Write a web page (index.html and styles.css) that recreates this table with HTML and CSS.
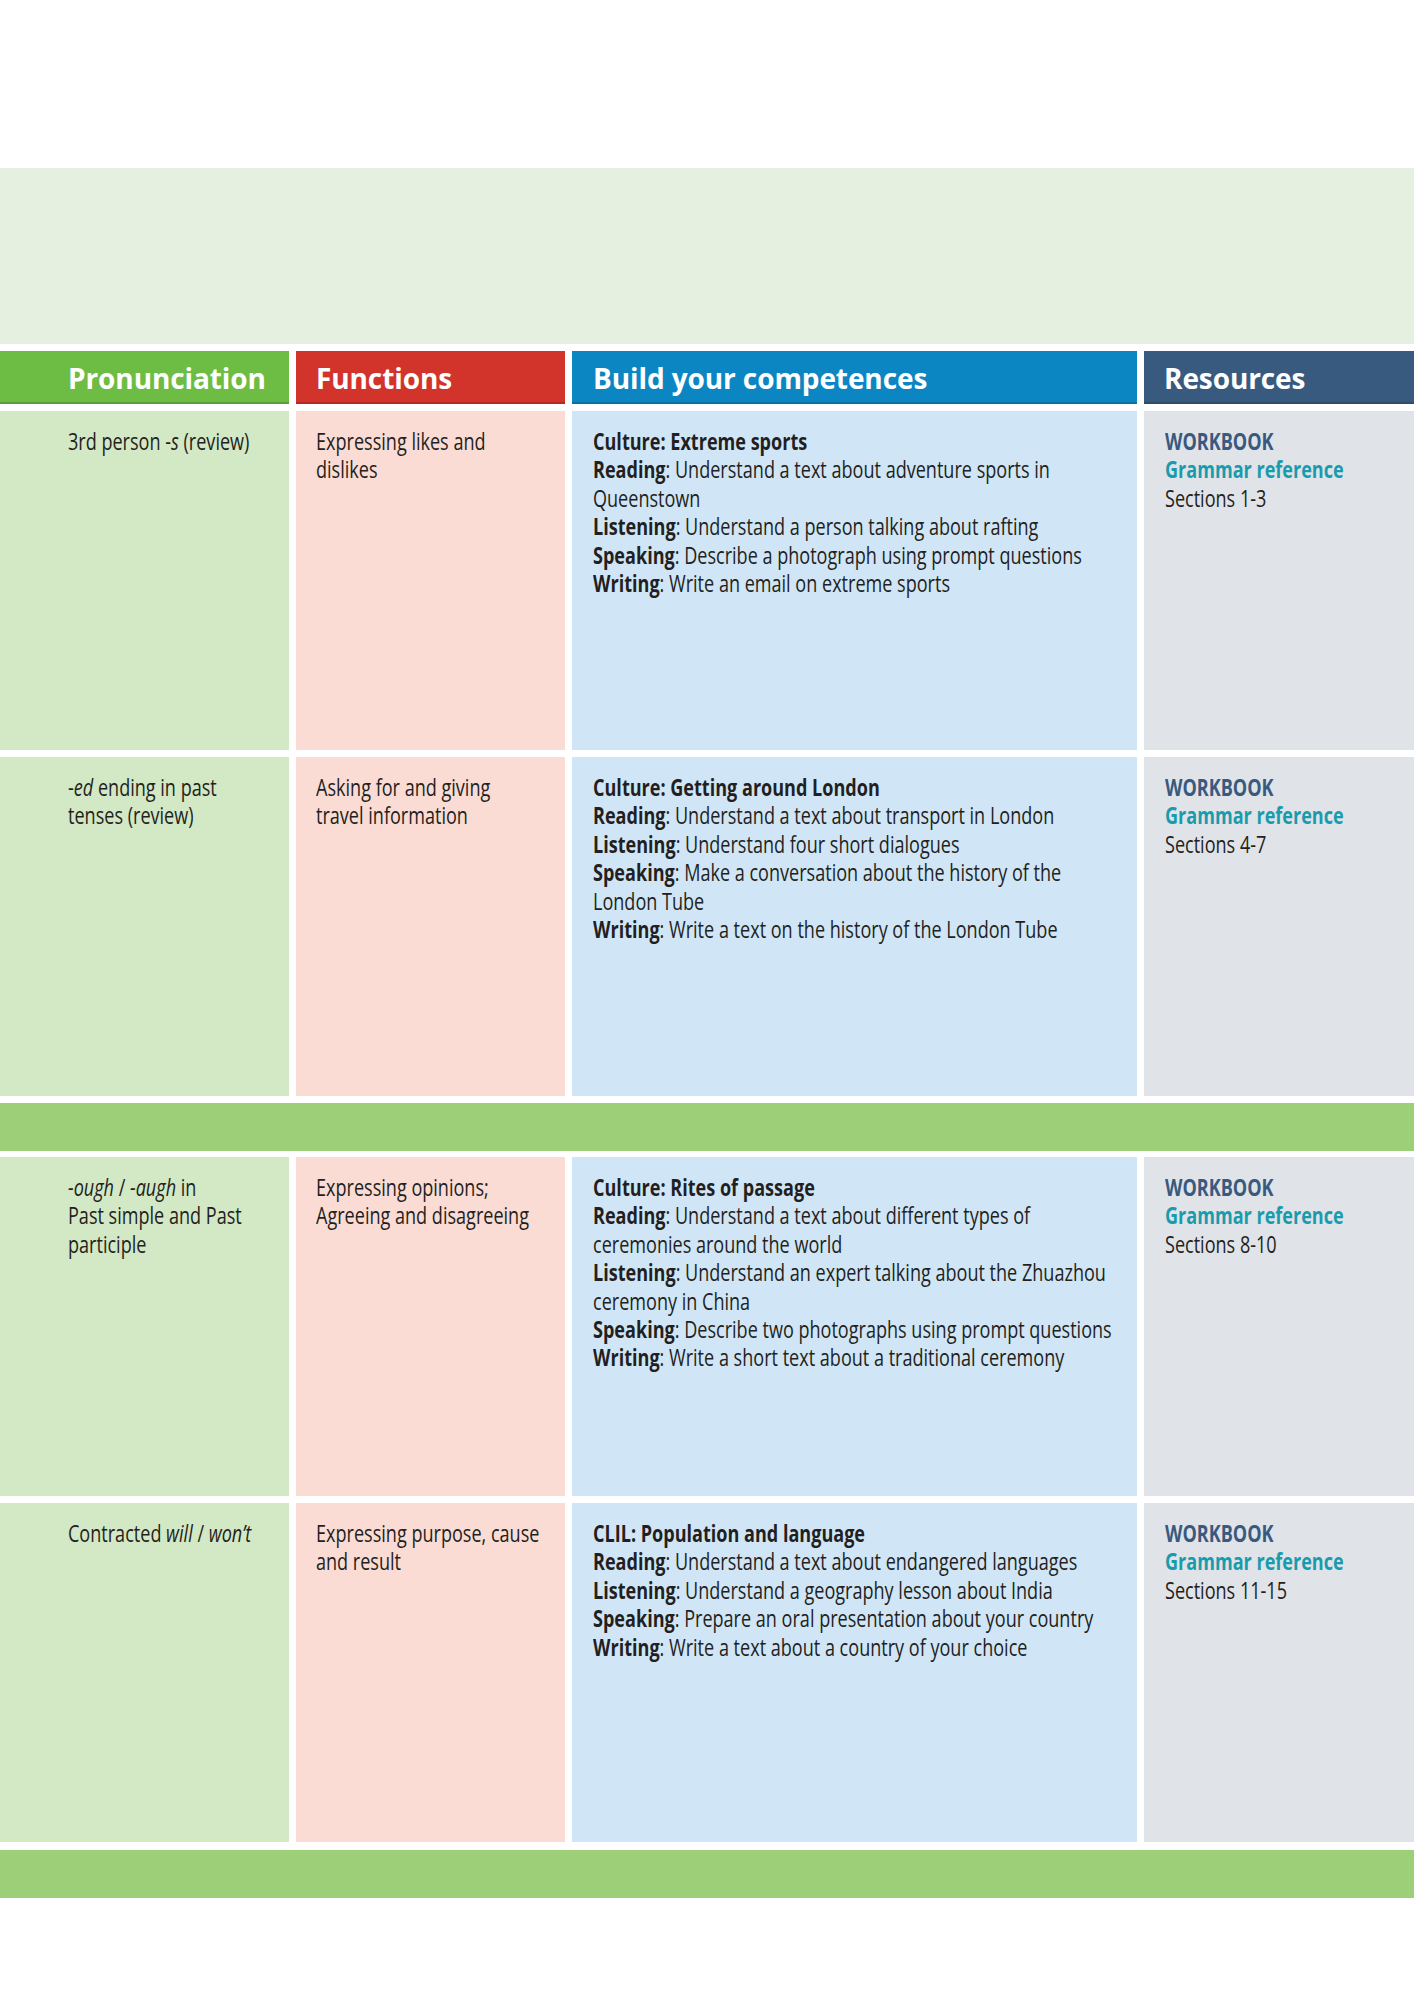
FILE: index.html
```html
<!DOCTYPE html>
<html lang="en">
<head>
<meta charset="utf-8">
<title>Syllabus</title>
<link rel="stylesheet" href="styles.css">
</head>
<body>
<div class="page">
  <div class="topband"></div>
  <div class="table">
    <div class="row head">
      <div class="hcell h-pron">Pronunciation</div>
      <div class="hcell h-func">Functions</div>
      <div class="hcell h-comp">Build your competences</div>
      <div class="hcell h-res">Resources</div>
    </div>

    <div class="row body">
      <div class="cell c-pron"><span class="txt">3rd person -<i>s</i> (review)</span></div>
      <div class="cell c-func"><span class="txt">Expressing likes and<br>dislikes</span></div>
      <div class="cell c-comp"><span class="txt"><b>Culture: Extreme sports</b><br><b>Reading</b>: Understand a text about adventure sports in<br>Queenstown<br><b>Listening</b>: Understand a person talking about rafting<br><b>Speaking</b>: Describe a photograph using prompt questions<br><b>Writing</b>: Write an email on extreme sports</span></div>
      <div class="cell c-res"><span class="txt"><b class="wb">WORKBOOK</b><br><b class="gr">Grammar reference</b><br>Sections 1-3</span></div>
    </div>

    <div class="row body">
      <div class="cell c-pron"><span class="txt">-<i>ed</i> ending in past<br>tenses (review)</span></div>
      <div class="cell c-func"><span class="txt">Asking for and giving<br>travel information</span></div>
      <div class="cell c-comp"><span class="txt"><b>Culture: Getting around London</b><br><b>Reading</b>: Understand a text about transport in London<br><b>Listening</b>: Understand four short dialogues<br><b>Speaking</b>: Make a conversation about the history of the<br>London Tube<br><b>Writing</b>: Write a text on the history of the London Tube</span></div>
      <div class="cell c-res"><span class="txt"><b class="wb">WORKBOOK</b><br><b class="gr">Grammar reference</b><br>Sections 4-7</span></div>
    </div>

    <div class="band band-mid"></div>

    <div class="row body">
      <div class="cell c-pron"><span class="txt"><i>-ough</i> / <i>-augh</i> in<br>Past simple and Past<br>participle</span></div>
      <div class="cell c-func"><span class="txt">Expressing opinions;<br>Agreeing and disagreeing</span></div>
      <div class="cell c-comp"><span class="txt"><b>Culture: Rites of passage</b><br><b>Reading</b>: Understand a text about different types of<br>ceremonies around the world<br><b>Listening</b>: Understand an expert talking about the Zhuazhou<br>ceremony in China<br><b>Speaking</b>: Describe two photographs using prompt questions<br><b>Writing</b>: Write a short text about a traditional ceremony</span></div>
      <div class="cell c-res"><span class="txt"><b class="wb">WORKBOOK</b><br><b class="gr">Grammar reference</b><br>Sections 8-10</span></div>
    </div>

    <div class="row body">
      <div class="cell c-pron"><span class="txt">Contracted <i>will</i> / <i>won’t</i></span></div>
      <div class="cell c-func"><span class="txt">Expressing purpose, cause<br>and result</span></div>
      <div class="cell c-comp"><span class="txt"><b>CLIL: Population and language</b><br><b>Reading</b>: Understand a text about endangered languages<br><b>Listening</b>: Understand a geography lesson about India<br><b>Speaking</b>: Prepare an oral presentation about your country<br><b>Writing</b>: Write a text about a country of your choice</span></div>
      <div class="cell c-res"><span class="txt"><b class="wb">WORKBOOK</b><br><b class="gr">Grammar reference</b><br>Sections 11-15</span></div>
    </div>

    <div class="band band-end"></div>
  </div>
</div>
</body>
</html>
```

FILE: styles.css
```css
html, body {
  margin: 0;
  padding: 0;
  background: #ffffff;
  overflow-x: hidden;
}

.page {
  width: 1414px;
  padding-top: 168px;
  font-family: "Open Sans", "DejaVu Sans", sans-serif;
  color: #231f20;
}

.topband {
  height: 176px;
  background: #e5f0e0;
}

.table {
  display: flex;
  flex-direction: column;
  gap: 7px;
  margin-top: 7px;
}

.row {
  display: grid;
  grid-template-columns: 289px 269px 565px 270px;
  column-gap: 7px;
}

.row.head {
  height: 53px;
}

.hcell {
  display: flex;
  align-items: center;
  padding-left: 68px;
  padding-top: 2px;
  box-sizing: border-box;
  color: #ffffff;
  font-weight: 700;
  font-size: 28px;
  letter-spacing: -0.1px;
  border-bottom: 2px solid rgba(0, 0, 0, 0.16);
}

.h-pron { background: #6dbd45; }
.h-func { background: #d2332a; padding-left: 20px; }
.h-comp { background: #0b86c3; padding-left: 21px; }
.h-res  { background: #395a7f; padding-left: 20px; }

.row.body {
  height: 339px;
}

.cell {
  box-sizing: border-box;
  padding-top: 16px;
  overflow: hidden;
  font-size: 23px;
  line-height: 28.4px;
}

.txt {
  display: block;
  white-space: nowrap;
  transform: scaleX(0.785);
  transform-origin: 0 0;
}

.cell b { font-weight: 700; }

.c-pron { background: #d3e8c5; padding-left: 68px; }
.c-func { background: #fadcd5; padding-left: 20px; }
.c-comp { background: #d0e6f7; padding-left: 21px; }
.c-res  { background: #e0e3e8; padding-left: 21px; }

.wb { color: #395a7f; }
.gr { color: #1a9bad; }

.band {
  height: 48px;
  background: #9ccf77;
}

.band-mid {
  margin-bottom: -1px;
}

.band-end {
  margin-top: 1px;
}
```
